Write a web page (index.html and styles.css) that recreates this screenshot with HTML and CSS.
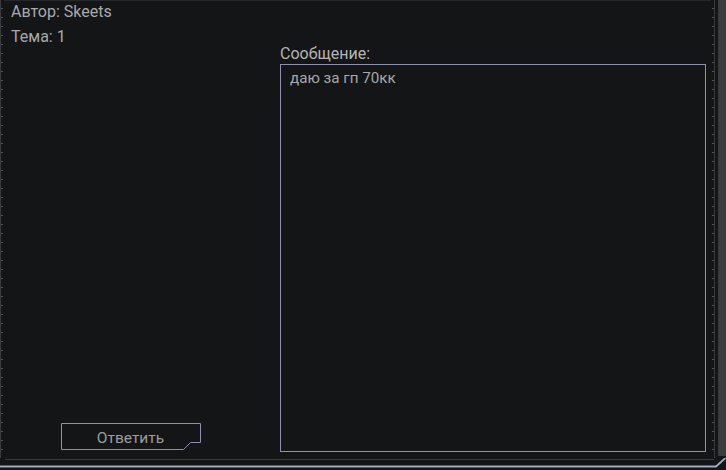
FILE: index.html
```html
<!DOCTYPE html>
<html lang="ru">
<head>
<meta charset="utf-8">
<link rel="stylesheet" href="styles.css">
</head>
<body>
<div class="window">
  <div class="body">
    <div class="ruler-left"></div>
    <div class="main">
      <div class="col-left">
        <div class="meta">Автор: Skeets</div>
        <div class="meta">Тема: 1</div>
        <div class="spacer"></div>
        <div class="reply">
          <svg class="reply-frame" width="141" height="28" viewBox="0 0 141 28">
            <path d="M0.5 0.5 H139.5 V19.5 H129.5 L122.5 26.5 H0.5 Z" fill="none" stroke="#8f8fb0" stroke-width="1"/>
          </svg>
          <span class="reply-text">Ответить</span>
        </div>
      </div>
      <div class="col-right">
        <div class="label">Сообщение:</div>
        <div class="message">даю за гп 70кк</div>
      </div>
    </div>
    <div class="ruler-right"></div>
    <div class="gap"></div>
    <div class="panel"></div>
  </div>
  <svg class="bottom" width="726" height="12" viewBox="0 0 726 12">
    <line x1="5" y1="1.5" x2="714" y2="1.5" stroke="#3a3b3e" stroke-width="1"/>
    <path d="M0 8.5 H716 L726 -0.5" fill="none" stroke="#a4a4cc" stroke-width="1.8"/>
  </svg>
</div>
</body>
</html>
```

FILE: styles.css
```css
html, body {
  margin: 0;
  padding: 0;
  background: #141517;
}
body {
  width: 726px;
  height: 470px;
  overflow: hidden;
  font-family: Roboto, "Noto Sans", sans-serif;
  font-size: 16px;
  color: #a9a9a9;
}
.window {
  display: flex;
  flex-direction: column;
  width: 726px;
  height: 470px;
}
.body {
  display: flex;
  height: 458px;
}
.ruler-left {
  width: 4px;
  flex: none;
  border-left: 1px solid #3a3b3e;
  box-sizing: border-box;
  background: repeating-linear-gradient(to bottom, transparent 0 8px, #505156 8px 9px) no-repeat;
  background-size: 2px 100%;
}
.main {
  flex: 1;
  display: flex;
  border-top: 1px solid #26272a;
  padding-left: 7px;
}
.col-left {
  width: 269px;
  flex: none;
  display: flex;
  flex-direction: column;
  gap: 3px;
  padding-bottom: 7px;
}
.meta {
  line-height: 22px;
  height: 22px;
}
.spacer {
  flex: 1;
}
.reply {
  position: relative;
  margin-left: 50px;
  width: 141px;
  height: 28px;
  display: flex;
  align-items: center;
  justify-content: center;
}
.reply-frame {
  position: absolute;
  left: 0;
  top: 0;
}
.reply-text {
  position: relative;
  font-size: 15.5px;
  color: #9d9d9d;
  padding-top: 2px;
  padding-right: 2px;
}
.col-right {
  width: 426px;
  flex: none;
  display: flex;
  flex-direction: column;
  padding-top: 43px;
  padding-bottom: 6px;
}
.label {
  line-height: 20px;
  height: 20px;
  color: #b4b4b4;
}
.message {
  flex: 1;
  border: 1px solid #8f8fb0;
  padding: 4px 9px;
  line-height: 18px;
  font-size: 15.2px;
  color: #a8a8a8;
}
.ruler-right {
  width: 4px;
  flex: none;
  border-right: 1px solid #3a3b3e;
  box-sizing: border-box;
  background: repeating-linear-gradient(to bottom, transparent 0 8px, #505156 8px 9px) no-repeat right top;
  background-size: 2px 100%;
}
.gap {
  width: 3px;
  flex: none;
}
.panel {
  width: 8px;
  flex: none;
  height: 456px;
  background: #3c3c3e;
}
.bottom {
  display: block;
  flex: none;
}
```
